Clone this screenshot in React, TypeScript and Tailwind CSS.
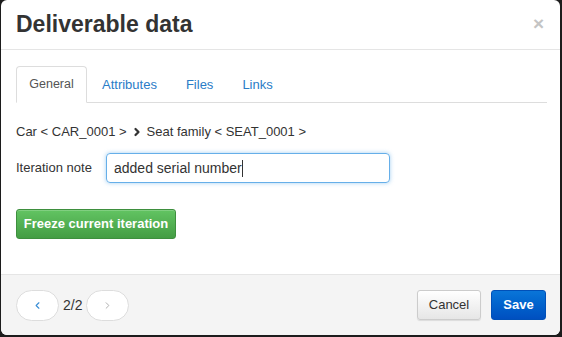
import { ChevronLeft, ChevronRight } from "lucide-react";

const TABS = ["General", "Attributes", "Files", "Links"];

export default function App() {
  return (
    <div className="w-[562px] h-[337px] bg-[#1c1c1c] pl-px pr-[2px] pb-[2px] font-['Liberation_Sans',Arial,sans-serif]">
      <div className="h-full bg-white rounded-[6px] overflow-hidden flex flex-col">
        {/* Header */}
        <div className="h-[50px] shrink-0 border-b border-[#e5e5e5] flex items-center justify-between pl-[15px] pr-[16px]">
          <h1 className="text-[23px] font-bold text-[#333] leading-none -mt-[1px]">Deliverable data</h1>
          <span className="text-[#c4c4c4] text-[19px] font-bold leading-none -mt-[2px]">×</span>
        </div>

        {/* Body */}
        <div className="flex-1 pl-[15px] pr-[13px] pt-[16px]">
          <div className="flex border-b border-[#ddd] h-[37px]">
            {TABS.map((t, i) => (
              <div
                key={t}
                className={
                  i === 0
                    ? "w-[71px] justify-center h-[37px] flex items-center text-[12.5px] text-[#555] bg-white border border-[#ddd] border-b-white rounded-t-[4px]"
                    : "px-[14px] h-[37px] flex items-center text-[13px] text-[#2a7cc7] ml-px"
                }
              >
                {t}
              </div>
            ))}
          </div>

          <div className="mt-[20px] flex items-center text-[13px] text-[#333] h-[18px]">
            <span>Car &lt; CAR_0001 &gt;</span>
            <ChevronRight size={12} strokeWidth={4.5} className="mx-[4px] text-[#333]" />
            <span>Seat family &lt; SEAT_0001 &gt;</span>
          </div>

          <div className="mt-[12px] flex items-center">
            <label className="text-[13px] text-[#333] w-[90px]">Iteration note</label>
            <div className="w-[284px] h-[30px] rounded-[4px] border border-[#66afe9] shadow-[0_0_4px_rgba(102,175,233,0.6)] flex items-center px-[7px] text-[14px] text-[#333]">
              added serial number<span className="w-px h-[17px] bg-[#333]" />
            </div>
          </div>

          <button className="mt-[26px] h-[30px] w-[160px] rounded-[3px] border border-[#3e8f3e] bg-gradient-to-b from-[#62c462] to-[#449d44] text-white text-[13px] font-bold shadow-[inset_0_1px_0_rgba(255,255,255,0.2)]">
            Freeze current iteration
          </button>
        </div>

        {/* Footer */}
        <div className="h-[61px] shrink-0 border-t border-[#e5e5e5] bg-[#f4f4f4] flex items-center justify-between pl-[15px] pr-[14px]">
          <div className="flex items-center gap-[4px]">
            <div className="w-[43px] h-[31px] rounded-[16px] border border-[#ddd] bg-white flex items-center justify-center">
              <ChevronLeft size={11} strokeWidth={2.5} className="text-[#3a8ed6]" />
            </div>
            <span className="text-[14px] text-[#333]">2/2</span>
            <div className="w-[43px] h-[31px] rounded-[16px] border border-[#ddd] bg-white flex items-center justify-center">
              <ChevronRight size={11} strokeWidth={2} className="text-[#aaa]" />
            </div>
          </div>
          <div className="flex items-center gap-[10px]">
            <button className="h-[30px] w-[64px] rounded-[3px] border border-[#ccc] bg-gradient-to-b from-white to-[#e6e6e6] text-[13px] text-[#333] shadow-[0_1px_1px_rgba(0,0,0,0.1)]">
              Cancel
            </button>
            <button className="h-[30px] w-[55px] rounded-[3px] border border-[#0050b8] bg-gradient-to-b from-[#0a75d8] to-[#004fc0] text-[13px] font-bold text-white">
              Save
            </button>
          </div>
        </div>
      </div>
    </div>
  );
}
